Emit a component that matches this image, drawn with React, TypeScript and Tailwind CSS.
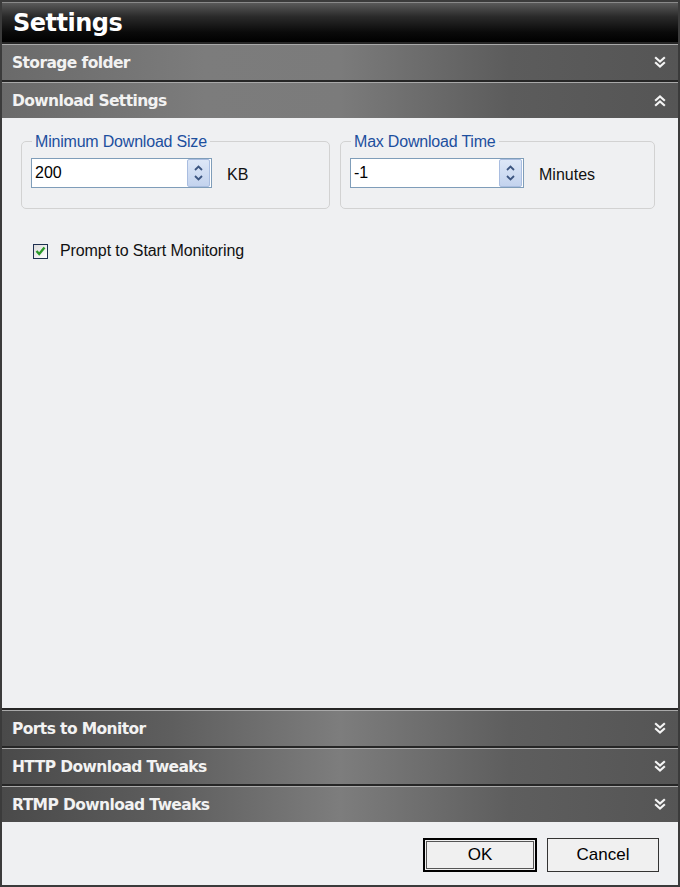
import React from "react";

const hdrFont = { fontFamily: '"DejaVu Sans", Verdana, sans-serif' };

function Chevrons({ up }: { up?: boolean }) {
  return (
    <svg width="12" height="13" viewBox="0 0 12 13" className="shrink-0">
      {up ? (
        <g fill="none" stroke="#f4f4f4" strokeWidth="2.2" strokeLinecap="square">
          <path d="M2 6 L6 2.5 L10 6" />
          <path d="M2 11 L6 7.5 L10 11" />
        </g>
      ) : (
        <g fill="none" stroke="#f4f4f4" strokeWidth="2.2" strokeLinecap="square">
          <path d="M2 2 L6 5.5 L10 2" />
          <path d="M2 7 L6 10.5 L10 7" />
        </g>
      )}
    </svg>
  );
}

function Header({ label, up, bottom }: { label: string; up?: boolean; bottom?: boolean }) {
  return (
    <div className="flex flex-col h-[38px] shrink-0">
      <div className="h-[2px] bg-[#262626]" />
      <div className="h-[1px] bg-[#a9a9a9]" />
      <div
        className={
          "flex-1 flex items-center justify-between pl-[10px] pr-[12px] " +
          (bottom
            ? "bg-[linear-gradient(to_right,#4a4a4a_0%,#5e5e5e_25%,#7d7d7d_50%,#5e5e5e_75%,#555555_100%)]"
            : "bg-[linear-gradient(to_right,#6a6a6a_0%,#7c7c7c_30%,#7b7b7b_50%,#5c5c5c_75%,#555555_100%)]")
        }
      >
        <span className="text-[15.5px] font-bold text-[#f2f2f2] leading-none tracking-[-0.6px] pt-[2px]" style={hdrFont}>
          {label}
        </span>
        <Chevrons up={up} />
      </div>
    </div>
  );
}

function Spin() {
  return (
    <div className="w-[23px] h-[28px] mr-[1px] rounded-[2px] border border-[#a9bde0] bg-[linear-gradient(to_bottom,#dde7f7,#c3d3ee)] flex flex-col items-center justify-center gap-[4px]">
      <svg width="9" height="6" viewBox="0 0 9 6">
        <path d="M1 5 L4.5 1.5 L8 5" fill="none" stroke="#3c5580" strokeWidth="1.8" />
      </svg>
      <svg width="9" height="6" viewBox="0 0 9 6">
        <path d="M1 1 L4.5 4.5 L8 1" fill="none" stroke="#3c5580" strokeWidth="1.8" />
      </svg>
    </div>
  );
}

function Group({
  legend,
  value,
  unit,
  inputW,
  className,
}: {
  legend: string;
  value: string;
  unit: string;
  inputW: string;
  className: string;
}) {
  return (
    <fieldset className={"border border-[#d2d2d2] rounded-[5px] h-[76px] pl-[9px] " + className}>
      <legend className="ml-[1px] px-[3px] text-[16px] leading-none text-[#1d4f9e] tracking-[-0.2px] pt-[1px]">
        {legend}
      </legend>
      <div className="flex items-center mt-[8px]">
        <div className={"h-[30px] flex items-center justify-between border border-[#7f9db9] bg-white " + inputW}>
          <span className="pl-[3px] text-[16px] text-black leading-none">{value}</span>
          <Spin />
        </div>
        <span className="ml-[15px] mt-[3px] text-[16px] text-[#111] leading-none">{unit}</span>
      </div>
    </fieldset>
  );
}

export default function App() {
  return (
    <div
      className="w-[680px] h-[887px] flex flex-col border-2 border-[#3b3b3b] bg-[#eff0f2] overflow-hidden"
      style={{ fontFamily: '"Liberation Sans", Arial, sans-serif' }}
    >
      <div className="h-[40px] shrink-0 flex items-center pl-[11px] border-t border-[#8a8a8a] bg-[linear-gradient(to_bottom,#5a5a5a_0%,#2a2a2a_35%,#0a0a0a_75%,#000000_100%)]">
        <span className="text-[24px] font-bold text-white leading-none tracking-[-0.5px]" style={hdrFont}>
          Settings
        </span>
      </div>
      <Header label="Storage folder" />
      <Header label="Download Settings" up />
      <div className="flex-1 flex flex-col pl-[19px] pr-[23px] pt-[15px]">
        <div className="flex gap-[10px]">
          <Group legend="Minimum Download Size" value="200" unit="KB" inputW="w-[181px]" className="w-[309px]" />
          <Group legend="Max Download Time" value="-1" unit="Minutes" inputW="w-[174px]" className="flex-1" />
        </div>
        <div className="flex items-center mt-[34px] ml-[12px]">
          <div className="w-[15px] h-[15px] border border-[#1e3050] bg-[linear-gradient(to_bottom_right,#dcdcdc,#ffffff)] flex items-center justify-center">
            <svg width="11" height="10" viewBox="0 0 11 10">
              <path d="M1.5 5 L4.2 8 L9.5 1.5" fill="none" stroke="#2a9a2a" strokeWidth="2.4" />
            </svg>
          </div>
          <span className="ml-[12px] text-[16px] text-[#111] leading-none tracking-[-0.1px]">
            Prompt to Start Monitoring
          </span>
        </div>
      </div>
      <Header label="Ports to Monitor" bottom />
      <Header label="HTTP Download Tweaks" bottom />
      <Header label="RTMP Download Tweaks" bottom />
      <div className="h-[63px] shrink-0 flex items-start justify-end gap-[10px] pr-[19px] pt-[16px]">
        <button className="w-[114px] h-[34px] border-2 border-black bg-[#f0f0f0] flex items-center justify-center">
          <span className="w-[108px] h-[28px] border border-[#555] flex items-center justify-center text-[17px] text-black">
            OK
          </span>
        </button>
        <button className="w-[112px] h-[34px] border border-[#333] bg-[#f0f0f0] text-[17px] text-black">
          Cancel
        </button>
      </div>
    </div>
  );
}
